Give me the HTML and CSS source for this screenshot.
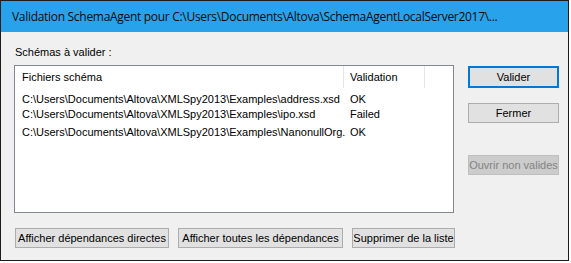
FILE: index.html
```html
<!DOCTYPE html>
<html>
<head>
<meta charset="utf-8">
<link rel="stylesheet" href="styles.css">
</head>
<body>
<div class="window">
  <div class="titlebar">Validation SchemaAgent pour C:\Users\Documents\Altova\SchemaAgentLocalServer2017\...</div>
  <div class="content">
    <div class="label">Schémas à valider :</div>
    <div class="main">
      <div class="list">
        <div class="list-head">
          <div class="col-file">Fichiers schéma</div>
          <div class="col-val">Validation</div>
          <div class="col-rest"></div>
        </div>
        <div class="row r1">
          <div class="col-file">C:\Users\Documents\Altova\XMLSpy2013\Examples\address.xsd</div>
          <div class="col-val">OK</div>
        </div>
        <div class="row r2">
          <div class="col-file">C:\Users\Documents\Altova\XMLSpy2013\Examples\ipo.xsd</div>
          <div class="col-val">Failed</div>
        </div>
        <div class="row r3">
          <div class="col-file">C:\Users\Documents\Altova\XMLSpy2013\Examples\NanonullOrg.</div>
          <div class="col-val">OK</div>
        </div>
      </div>
      <div class="side">
        <button class="btn default">Valider</button>
        <button class="btn fermer">Fermer</button>
        <button class="btn disabled">Ouvrir non valides</button>
      </div>
    </div>
    <div class="bottom">
      <button class="btn b1">Afficher dépendances directes</button>
      <button class="btn b2">Afficher toutes les dépendances</button>
      <button class="btn b3">Supprimer de la liste</button>
    </div>
  </div>
</div>
</body>
</html>
```
FILE: styles.css
```css
* { box-sizing: border-box; }
body { margin: 0; background: #ffffff; font-family: "Liberation Sans", Arial, sans-serif; font-size: 11px; color: #000; }
.window { width: 569px; height: 261px; border: 1px solid #1c1c1c; display: flex; flex-direction: column; background: #f0f0f0; }
.titlebar { height: 31px; background: #29a2ec; color: #0a0a0a; font-family: "Open Sans", "Noto Sans", sans-serif; font-size: 12px; letter-spacing: -0.3px; line-height: 31px; padding-left: 11px; white-space: nowrap; overflow: hidden; }
.content { flex: 1; display: flex; flex-direction: column; padding: 0 0 0 13px; }
.label { margin-top: 14px; line-height: 13px; height: 13px; padding-left: 1px; }
.main { display: flex; margin-top: 6px; }
.list { width: 440px; height: 148px; border: 1px solid #828790; background: #fff; overflow: hidden; }
.list-head { display: flex; height: 22px; line-height: 23px; }
.col-file { width: 329px; white-space: nowrap; padding-left: 7px; }
.col-val { width: 81px; padding-left: 6px; white-space: nowrap; }
.list-head .col-file, .list-head .col-val { border-right: 1px solid #e5e5e5; }
.col-rest { flex: 1; }
.row { display: flex; height: 13px; line-height: 13px; }
.r1 { margin-top: 5px; }
.r2 { margin-top: 2px; }
.r3 { margin-top: 5px; }
.side { display: flex; flex-direction: column; margin-left: 14px; }
.btn { font-family: "Liberation Sans", Arial, sans-serif; font-size: 11px; background: #e1e1e1; border: 1px solid #adadad; color: #000; padding: 0; height: 20px; line-height: 18px; }
.side .btn { width: 91px; }
.default { border: 2px solid #0078d7; height: 22px; margin-top: 1px; }
.fermer { margin-top: 15px; }
.disabled { margin-top: 32px; background: #cccccc; border-color: #bfbfbf; color: #838383; }
.bottom { display: flex; gap: 9px; margin-top: 15px; padding-left: 1px; }
.b1 { width: 154px; }
.b2 { width: 165px; }
.b3 { width: 103px; }
```
